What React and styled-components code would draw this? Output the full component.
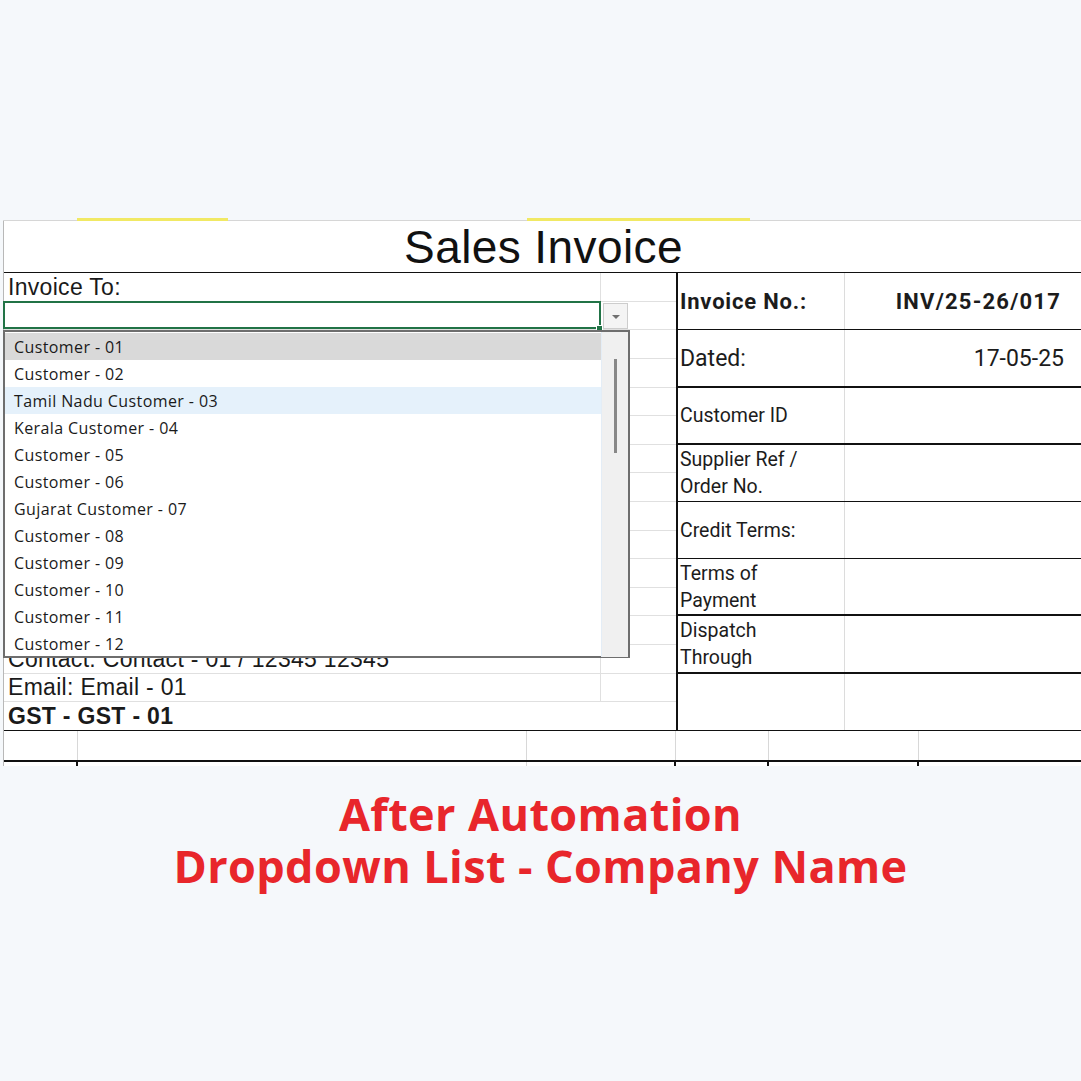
import React from 'react';
import styled, { createGlobalStyle } from 'styled-components';

const GlobalStyle = createGlobalStyle`
  html, body {
    margin: 0;
    padding: 0;
    background: #f5f8fb;
  }
  body {
    font-family: "Liberation Sans", Arial, sans-serif;
  }
`;

const customers = [
  'Customer - 01',
  'Customer - 02',
  'Tamil Nadu Customer - 03',
  'Kerala Customer - 04',
  'Customer - 05',
  'Customer - 06',
  'Gujarat Customer - 07',
  'Customer - 08',
  'Customer - 09',
  'Customer - 10',
  'Customer - 11',
  'Customer - 12',
];

const leftHeights = [29, 28, 29, 29, 28, 29, 28, 29, 29, 28, 29, 28, 29, 29, 28, 29];

const details = [
  { label: 'Invoice No.:', value: 'INV/25-26/017', bold: true, h: 57, b: 1 },
  { label: 'Dated:', value: '17-05-25', big: true, h: 58, b: 2 },
  { label: 'Customer ID', h: 57, b: 2 },
  { label: ['Supplier Ref /', 'Order No.'], h: 57, b: 1 },
  { label: 'Credit Terms:', h: 57, b: 1 },
  { label: ['Terms of', 'Payment'], h: 57, b: 2 },
  { label: ['Dispatch', 'Through'], h: 58, b: 2 },
  { label: '', h: 57, b: 1 },
];

const itemCols = [
  { w: 74, dark: true },
  { w: 449, dark: false },
  { w: 149, dark: true },
  { w: 93, dark: true },
  { w: 150, dark: true },
];

const App = () => (
  <Page>
    <GlobalStyle />
    <TopRule>
      <RuleSeg style={{ width: 74 }} />
      <RuleSeg $mark style={{ width: 151 }} />
      <RuleSeg style={{ width: 299 }} />
      <RuleSeg $mark style={{ width: 223 }} />
      <RuleSeg style={{ flex: 1 }} />
    </TopRule>
    <Sheet>
      <Title>Sales Invoice</Title>
      <Body>
        <LeftCol>
          {leftHeights.map((h, i) => {
            const last = i === leftHeights.length - 1;
            let text = null;
            if (i === 0) text = 'Invoice To:';
            if (i === 13) text = 'Contact: Contact - 01 / 12345 12345';
            if (i === 14) text = 'Email: Email - 01';
            if (last) {
              return (
                <LeftRow key={i} $h={h} $last>
                  <CellA $merged $bold>GST - GST - 01</CellA>
                </LeftRow>
              );
            }
            return (
              <LeftRow key={i} $h={h}>
                <CellA $selected={i === 1}>{text}</CellA>
                <CellB>
                  {i === 1 && (
                    <DropButton>
                      <Caret />
                    </DropButton>
                  )}
                </CellB>
              </LeftRow>
            );
          })}

          <Dropdown>
            <List>
              {customers.map((c, i) => (
                <Item key={c} $active={i === 0} $hover={i === 2}>
                  {c}
                </Item>
              ))}
            </List>
            <Track>
              <Thumb />
            </Track>
          </Dropdown>
        </LeftCol>

        <RightCol>
          {details.map((d, i) => (
            <RightRow key={i} $h={d.h} $b={d.b}>
              <Label $bold={d.bold} $big={d.big}>
                {Array.isArray(d.label) ? (
                  <span>
                    {d.label[0]}
                    <br />
                    {d.label[1]}
                  </span>
                ) : (
                  d.label
                )}
              </Label>
              <Value $bold={d.bold} $big={d.big}>
                {d.value}
              </Value>
            </RightRow>
          ))}
        </RightCol>
      </Body>

      <ItemRow>
        {itemCols.map((c, i) => (
          <ItemCell key={i} style={{ width: c.w }} />
        ))}
        <ItemCell $open />
      </ItemRow>
      <ItemRow $stub>
        {itemCols.map((c, i) => (
          <ItemCell key={i} $dark={c.dark} style={{ width: c.w }} />
        ))}
        <ItemCell $open />
      </ItemRow>
    </Sheet>

    <Caption>
      <CaptionLine>After Automation</CaptionLine>
      <CaptionLine>Dropdown List - Company Name</CaptionLine>
    </Caption>
  </Page>
);

const Page = styled.div`
  width: 1081px;
  height: 1081px;
  padding-top: 218px;
  box-sizing: border-box;
  overflow: hidden;
`;

const TopRule = styled.div`
  display: flex;
  height: 3px;
  margin-left: 3px;
`;

const RuleSeg = styled.div`
  height: 3px;
  box-sizing: border-box;
  background: ${p => (p.$mark ? '#f1e964' : 'transparent')};
  border-bottom: 1px solid ${p => (p.$mark ? '#f1e964' : '#d6d6d6')};
`;

const Sheet = styled.div`
  margin-left: 3px;
  width: 1078px;
  box-sizing: border-box;
  background: #fff;
  border-left: 1px solid #b8b8b8;
`;

const Title = styled.div`
  height: 52px;
  box-sizing: border-box;
  border-bottom: 1px solid #111;
  display: flex;
  align-items: center;
  justify-content: center;
  padding-left: 2px;
  font-family: "Liberation Sans", Arial, sans-serif;
  font-size: 46px;
  letter-spacing: 0.4px;
  color: #111;
`;

const Body = styled.div`
  display: grid;
  grid-template-columns: 672px 1fr;
`;

const LeftCol = styled.div`
  position: relative;
  display: flex;
  flex-direction: column;
`;

const LeftRow = styled.div`
  display: grid;
  grid-template-columns: 597px 75px;
  height: ${p => p.$h}px;
  box-sizing: border-box;
  border-bottom: 1px solid ${p => (p.$last ? '#111' : '#e0e0e0')};
`;

const CellA = styled.div`
  position: relative;
  grid-column: ${p => (p.$merged ? '1 / 3' : 'auto')};
  display: flex;
  align-items: center;
  padding-left: 4px;
  border-right: ${p => (p.$merged ? 'none' : '1px solid #e0e0e0')};
  font-family: "Liberation Sans", Arial, sans-serif;
  font-size: 23px;
  letter-spacing: 0.3px;
  font-weight: ${p => (p.$bold ? 700 : 400)};
  color: #1a1a1a;
  white-space: nowrap;
  overflow: hidden;
  ${p =>
    p.$selected &&
    `
    overflow: visible;
    margin-left: -1px;
    margin-top: -1px;
    border-right: none;
    box-shadow: inset 0 0 0 2px #217346;
    &::after {
      content: '';
      position: absolute;
      right: -2px;
      bottom: -3px;
      width: 5px;
      height: 5px;
      background: #217346;
      border: 1px solid #fff;
    }
  `}
`;

const CellB = styled.div`
  display: flex;
  align-items: flex-start;
`;

const DropButton = styled.div`
  width: 25px;
  height: 26px;
  margin: 1px 0 0 2px;
  box-sizing: border-box;
  background: #f4f4f4;
  border: 1px solid #cdcdcd;
  display: flex;
  align-items: center;
  justify-content: center;
`;

const Caret = styled.div`
  width: 0;
  height: 0;
  margin-top: 2px;
  border-left: 4px solid transparent;
  border-right: 4px solid transparent;
  border-top: 4px solid #707070;
`;

const Dropdown = styled.div`
  position: absolute;
  top: 57px;
  left: -1px;
  width: 627px;
  height: 328px;
  box-sizing: border-box;
  background: #fff;
  border: 2px solid #6e6e6e;
  display: grid;
  grid-template-columns: 1fr 27px;
  z-index: 2;
`;

const List = styled.div`
  display: flex;
  flex-direction: column;
  padding-top: 1px;
`;

const Item = styled.div`
  height: 27px;
  flex: none;
  display: flex;
  align-items: center;
  padding-left: 9px;
  font-family: "Open Sans", "Noto Sans", sans-serif;
  font-size: 16px;
  letter-spacing: 0.4px;
  color: #1a1a1a;
  background: ${p => (p.$active ? '#d9d9d9' : p.$hover ? '#e5f1fb' : 'transparent')};
`;

const Track = styled.div`
  background: #f0f0f0;
  border-left: 1px solid #e4edf6;
  display: flex;
  justify-content: center;
  padding-top: 27px;
`;

const Thumb = styled.div`
  width: 3px;
  height: 94px;
  background: #888;
`;

const RightCol = styled.div`
  border-left: 2px solid #111;
  display: flex;
  flex-direction: column;
`;

const RightRow = styled.div`
  display: grid;
  grid-template-columns: 167px 1fr;
  height: ${p => p.$h}px;
  box-sizing: border-box;
  border-bottom: ${p => p.$b}px solid #111;
`;

const Label = styled.div`
  display: flex;
  align-items: center;
  padding-left: 2px;
  border-right: 1px solid #dcdcdc;
  font-family: Roboto, "Liberation Sans", sans-serif;
  font-size: ${p => (p.$bold ? 22 : p.$big ? 23 : 19.5)}px;
  font-weight: ${p => (p.$bold ? 700 : 400)};
  letter-spacing: ${p => (p.$bold ? 0.8 : 0)}px;
  line-height: 27px;
  color: #1c1c1c;
  white-space: nowrap;
`;

const Value = styled.div`
  display: flex;
  align-items: center;
  justify-content: flex-end;
  padding-right: ${p => (p.$bold ? 20 : 17)}px;
  font-family: Roboto, "Liberation Sans", sans-serif;
  font-size: ${p => (p.$bold ? 22 : 23)}px;
  font-weight: ${p => (p.$bold ? 700 : 400)};
  letter-spacing: ${p => (p.$bold ? 1.2 : 0)}px;
  color: #1c1c1c;
`;

const ItemRow = styled.div`
  display: flex;
  height: ${p => (p.$stub ? 4 : 31)}px;
  box-sizing: border-box;
  border-bottom: ${p => (p.$stub ? 'none' : '2px solid #111')};
`;

const ItemCell = styled.div`
  flex: ${p => (p.$open ? 1 : 'none')};
  box-sizing: border-box;
  border-right: ${p => (p.$open ? 'none' : `${p.$dark ? 2 : 1}px solid ${p.$dark ? '#111' : '#d8d8d8'}`)};
`;

const Caption = styled.div`
  margin-top: 22px;
  display: flex;
  flex-direction: column;
  align-items: center;
  font-family: "Open Sans", "Noto Sans", sans-serif;
  font-weight: 700;
  font-size: 45px;
  letter-spacing: 0.4px;
  color: #e8262b;
`;

const CaptionLine = styled.div`
  line-height: 52px;
`;

export default App;
